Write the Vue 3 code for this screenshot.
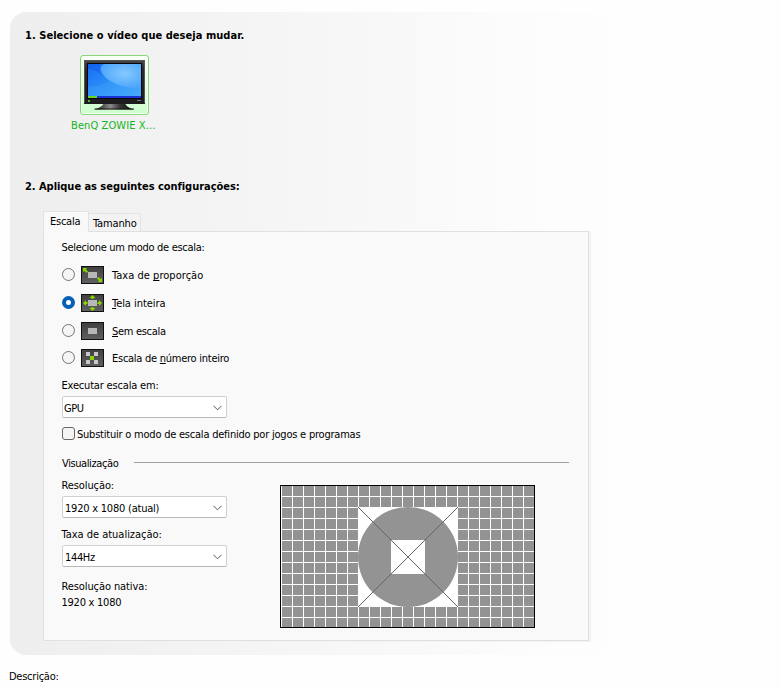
<script setup>
import { ref } from 'vue'

const modes = [
  { id: 'aspect', before: 'Taxa de ', key: 'p', after: 'roporção' },
  { id: 'full', before: '', key: 'T', after: 'ela inteira' },
  { id: 'none', before: '', key: 'S', after: 'em escala' },
  { id: 'integer', before: 'Escala de ', key: 'n', after: 'úmero inteiro' },
]
const selected = ref('full')

const columns = Array.from({ length: 22 }, (_, i) => 12 + i * 11)
const rows = Array.from({ length: 12 }, (_, i) => 11 + i * 11)
</script>

<template>
  <main class="window">
    <section class="panel">
      <h2 class="heading">1. Selecione o vídeo que deseja mudar.</h2>
      <div class="display">
        <div class="display-box">
          <svg width="67" height="58" viewBox="1 1 67 58">
            <defs>
              <linearGradient id="screen" x1="0" y1="0" x2="1" y2="1">
                <stop offset="0" stop-color="#1b6cf2" />
                <stop offset=".4" stop-color="#2f92f8" />
                <stop offset="1" stop-color="#45aafc" />
              </linearGradient>
              <radialGradient id="glow" cx=".6" cy=".4" r=".65">
                <stop offset="0" stop-color="#86c8ff" />
                <stop offset="1" stop-color="#48a4fb" />
              </radialGradient>
              <linearGradient id="bezel" x1="0" y1="0" x2="0" y2="1">
                <stop offset="0" stop-color="#4a4a4c" />
                <stop offset=".2" stop-color="#2b2b2d" />
                <stop offset="1" stop-color="#1c1c1e" />
              </linearGradient>
              <linearGradient id="stand" x1="0" y1="0" x2="1" y2="0">
                <stop offset="0" stop-color="#111" />
                <stop offset=".4" stop-color="#8a8a8a" />
                <stop offset=".65" stop-color="#333" />
                <stop offset="1" stop-color="#111" />
              </linearGradient>
            </defs>
            <path d="M24 48H45Q46 52 54 54.500H14.500Q22 52 24 48Z" fill="url(#stand)" />
            <path d="M14.500 54H54" stroke="#1a1a1a" />
            <rect x="4" y="5" width="61" height="44" fill="url(#bezel)" />
            <path d="M4.500 48V5.500H64.500V48" fill="none" stroke="#555557" />
            <rect x="7" y="8" width="55" height="36" fill="#08080c" />
            <rect x="8" y="9" width="53" height="32" fill="url(#screen)" />
            <path d="M24 9H61V33Q48 34 36 29Q22 22 20 16Q20 12 24 9Z" fill="url(#glow)" />
            <path d="M8 32Q21 31 29 26Q20 19 20 9H8Z" fill="#126bf5" opacity=".25" />
            <path d="M8 9H20Q20 18 26 23Q16 14 8 14Z" fill="#0a50e6" opacity=".35" />
            <rect x="8" y="41" width="53" height="2" fill="#1933d4" />
            <rect x="8" y="41" width="9" height="2" fill="#65d820" />
            <rect x="8" y="45" width="2" height="2" fill="#3fbf2a" />
            <path d="M57 45.500H61" stroke="#77777a" />
          </svg>
        </div>
        <span class="display-name">BenQ ZOWIE X...</span>
      </div>

      <h2 class="heading second">2. Aplique as seguintes configurações:</h2>

      <div class="tabs">
        <div class="tab active">Escala</div>
        <div class="tab">Tamanho</div>
      </div>

      <div class="page">
        <div class="text selecting">Selecione um modo de escala:</div>
        <div class="modes">
          <div v-for="m in modes" :key="m.id" class="mode" @click="selected = m.id">
            <span class="radio" :class="{ on: selected === m.id }"></span>
            <svg class="mode-icon" width="23" height="18" viewBox="0 0 23 18">
              <defs>
                <linearGradient :id="'bg-' + m.id" x1="0" y1="0" x2="0" y2="1">
                  <stop offset="0" stop-color="#404040" />
                  <stop offset="1" stop-color="#606060" />
                </linearGradient>
              </defs>
              <rect x=".5" y=".5" width="22" height="17" :fill="`url(#bg-${m.id})`" stroke="#111" />
              <rect v-if="m.id !== 'integer'" x="7" y="6" width="9" height="6" fill="#b8b8b8" />
              <g v-if="m.id === 'aspect'" fill="#86d600">
                <path d="M2 2H6L5 3.500L7 5.500L5.500 7L3.500 5L2 6Z" />
                <path d="M21 16H17L18 14.500L16 12.500L17.500 11L19.500 13L21 12Z" />
              </g>
              <g v-if="m.id === 'full'" fill="#86d600">
                <path d="M11.500 1L14.500 4H12.500V5H10.500V4H8.500Z" />
                <path d="M11.500 17L14.500 14H12.500V13H10.500V14H8.500Z" />
                <path d="M2 9L5 6V8H6.500V10H5V12Z" />
                <path d="M21 9L18 6V8H16.500V10H18V12Z" />
              </g>
              <g v-if="m.id === 'integer'" fill="#c8c8c8">
                <rect x="5" y="3" width="4" height="4" />
                <rect x="13" y="3" width="4" height="4" />
                <rect x="5" y="11" width="4" height="4" />
                <rect x="13" y="11" width="4" height="4" />
                <rect x="9" y="7" width="4" height="4" fill="#86d600" />
              </g>
            </svg>
            <span class="mode-label" :class="m.id">{{ m.before }}<u>{{ m.key }}</u>{{ m.after }}</span>
          </div>
        </div>

        <div class="text run-on">Executar escala em:</div>
        <div class="select gpu">
          <span>GPU</span>
          <svg width="9" height="6" viewBox="0 0 9 6"><path d="M.5 .8L4.500 4.800L8.500 .8" /></svg>
        </div>
        <div class="check-row">
          <span class="checkbox"></span>
          <span class="check-label">Substituir o modo de escala definido por jogos e programas</span>
        </div>

        <div class="divider"><span>Visualização</span><i></i></div>

        <div class="preview">
          <div class="fields">
            <div class="text">Resolução:</div>
            <div class="select">
              <span class="tight">1920 x 1080 (atual)</span>
              <svg width="9" height="6" viewBox="0 0 9 6"><path d="M.5 .8L4.500 4.800L8.500 .8" /></svg>
            </div>
            <div class="text rate">Taxa de atualização:</div>
            <div class="select">
              <span class="hertz">144Hz</span>
              <svg width="9" height="6" viewBox="0 0 9 6"><path d="M.5 .8L4.500 4.800L8.500 .8" /></svg>
            </div>
            <div class="text native">Resolução nativa:</div>
            <div class="text native-value">1920 x 1080</div>
          </div>
          <svg class="pattern" width="255" height="143" viewBox="0 0 255 143">
            <rect x=".5" y=".5" width="254" height="142" fill="#939393" stroke="#000" />
            <g fill="#fff">
              <rect x="1" y="1" width="1" height="141" />
              <rect v-for="x in columns" :key="'c' + x" :x="x" y="1" width="1" height="141" />
              <rect v-for="y in rows" :key="'r' + y" x="1" :y="y" width="253" height="1" />
              <rect x="78" y="22" width="100" height="100" />
            </g>
            <circle cx="128" cy="72" r="50" fill="#939393" />
            <rect x="111" y="55" width="34" height="34" fill="#fff" />
            <path d="M78 22L178 122M178 22L78 122" stroke="#666" />
          </svg>
        </div>
      </div>
    </section>
    <footer class="description">Descrição:</footer>
  </main>
</template>

<style>
body {
  margin: 0;
  background: #fff;
}
</style>

<style scoped>
.window {
  box-sizing: border-box;
  width: 780px;
  height: 687px;
  padding: 12px 0 0 10px;
  overflow: hidden;
  font: 11px/13px "DejaVu Sans Condensed", "DejaVu Sans", sans-serif;
  color: #000;
  background: #fefefe;
}
.panel {
  box-sizing: border-box;
  width: 598px;
  height: 643px;
  padding: 17px 0 0 15px;
  border-radius: 16px;
  background: linear-gradient(90deg, #eee, #fdfdfd 92%, #fdfdfd);
}
.heading {
  margin: 0;
  font-size: 11px;
  line-height: 13px;
  font-weight: bold;
  letter-spacing: 0.04px;
}
.second {
  margin-top: 48px;
  letter-spacing: -0.04px;
}
.display {
  display: flex;
  flex-direction: column;
  align-items: center;
  gap: 4px;
  width: 87px;
  margin: 13px 0 0 46px;
}
.display-box {
  width: 67px;
  height: 58px;
  border: 1px solid #8ed67a;
  border-radius: 3px;
  background: linear-gradient(#fafffa, #cdffcd);
  box-shadow: inset 0 0 0 1px #f2fff2;
}
.display-box svg {
  display: block;
}
.display-name {
  align-self: flex-start;
  color: #12b51c;
  white-space: nowrap;
  letter-spacing: 0.1px;
}
.tabs {
  display: flex;
  align-items: flex-end;
  height: 20px;
  margin: 18px 0 0 18px;
}
.tab {
  box-sizing: border-box;
  width: 52px;
  height: 18px;
  padding: 3px 0 0 4px;
  border: 1px solid #e3e3e3;
  border-width: 1px 1px 0 0;
  background: #f3f3f3;
  letter-spacing: -0.15px;
}
.tab.active {
  position: relative;
  width: 46px;
  height: 21px;
  margin-bottom: -1px;
  padding: 3px 0 0 6px;
  border-width: 1px 1px 0 1px;
  background: #f9f9f9;
  letter-spacing: -0.25px;
}
.page {
  box-sizing: border-box;
  width: 546px;
  height: 410px;
  margin-left: 18px;
  padding: 9px 0 0 18px;
  border: 1px solid #e0e0e0;
  background: #f9f9f9;
  box-shadow: 2px 1px 0 #f2f2f2;
}
.text {
  margin-left: -0.5px;
  letter-spacing: -0.1px;
}
.selecting {
  letter-spacing: -0.31px;
}
.run-on {
  letter-spacing: -0.18px;
}
.modes {
  margin: 7px 0 8px;
}
.mode {
  display: flex;
  align-items: center;
  height: 28px;
}
.mode:last-child {
  height: 26px;
}
.radio {
  box-sizing: border-box;
  width: 13px;
  height: 13px;
  margin: 0 6px 1px 0;
  border: 1px solid #737373;
  border-radius: 50%;
  background: #f5f5f5;
}
.radio.on {
  border: 4px solid #0560b6;
  background: #fff;
}
.mode-label {
  padding: 1px 0 0 8px;
}
.mode-label.aspect {
  letter-spacing: 0.03px;
}
.mode-label.full {
  letter-spacing: -0.05px;
}
.mode-label.none {
  letter-spacing: -0.3px;
}
.mode-label.integer {
  letter-spacing: -0.26px;
}
.mode-label u {
  text-decoration-thickness: 1px;
  text-underline-offset: 1px;
  text-decoration-skip-ink: none;
}
.select {
  box-sizing: border-box;
  display: flex;
  align-items: center;
  justify-content: space-between;
  width: 165px;
  height: 22px;
  margin-top: 4px;
  padding: 0 4px 0 2px;
  border: 1px solid #d0d0d0;
  border-bottom-color: #b8b8b8;
  border-radius: 2px;
  background: #fff;
}
.select span {
  padding-top: 3px;
}
.select .tight {
  letter-spacing: -0.22px;
}
.select .hertz {
  letter-spacing: -0.35px;
}
.select.gpu {
  padding-left: 1px;
}
.select.gpu span {
  letter-spacing: -0.5px;
}
.select svg {
  margin-top: 1px;
}
.select path {
  fill: none;
  stroke: #555;
  stroke-width: 1;
}
.check-row {
  display: flex;
  align-items: center;
  height: 13px;
  margin-top: 9px;
}
.checkbox {
  box-sizing: border-box;
  width: 13px;
  height: 13px;
  border: 1px solid #666;
  border-radius: 3px;
  background: #f5f5f5;
}
.check-label {
  padding: 2px 0 0 2px;
  letter-spacing: -0.22px;
}
.divider {
  display: flex;
  align-items: center;
  gap: 15px;
  margin-top: 17px;
}
.divider span {
  width: 57px;
  letter-spacing: -0.4px;
}
.divider i {
  width: 435px;
  height: 1px;
  margin-bottom: 2px;
  background: #a0a0a0;
}
.preview {
  display: flex;
  gap: 53px;
  margin-top: 9px;
}
.fields {
  width: 165px;
}
.rate {
  margin-top: 10px;
  letter-spacing: -0.02px;
}
.native {
  margin-top: 13px;
}
.native-value {
  margin-top: 3px;
  letter-spacing: -0.25px;
}
.pattern {
  margin-top: 6px;
}
.description {
  margin: 15px 0 0 -1px;
  letter-spacing: -0.25px;
}
</style>
